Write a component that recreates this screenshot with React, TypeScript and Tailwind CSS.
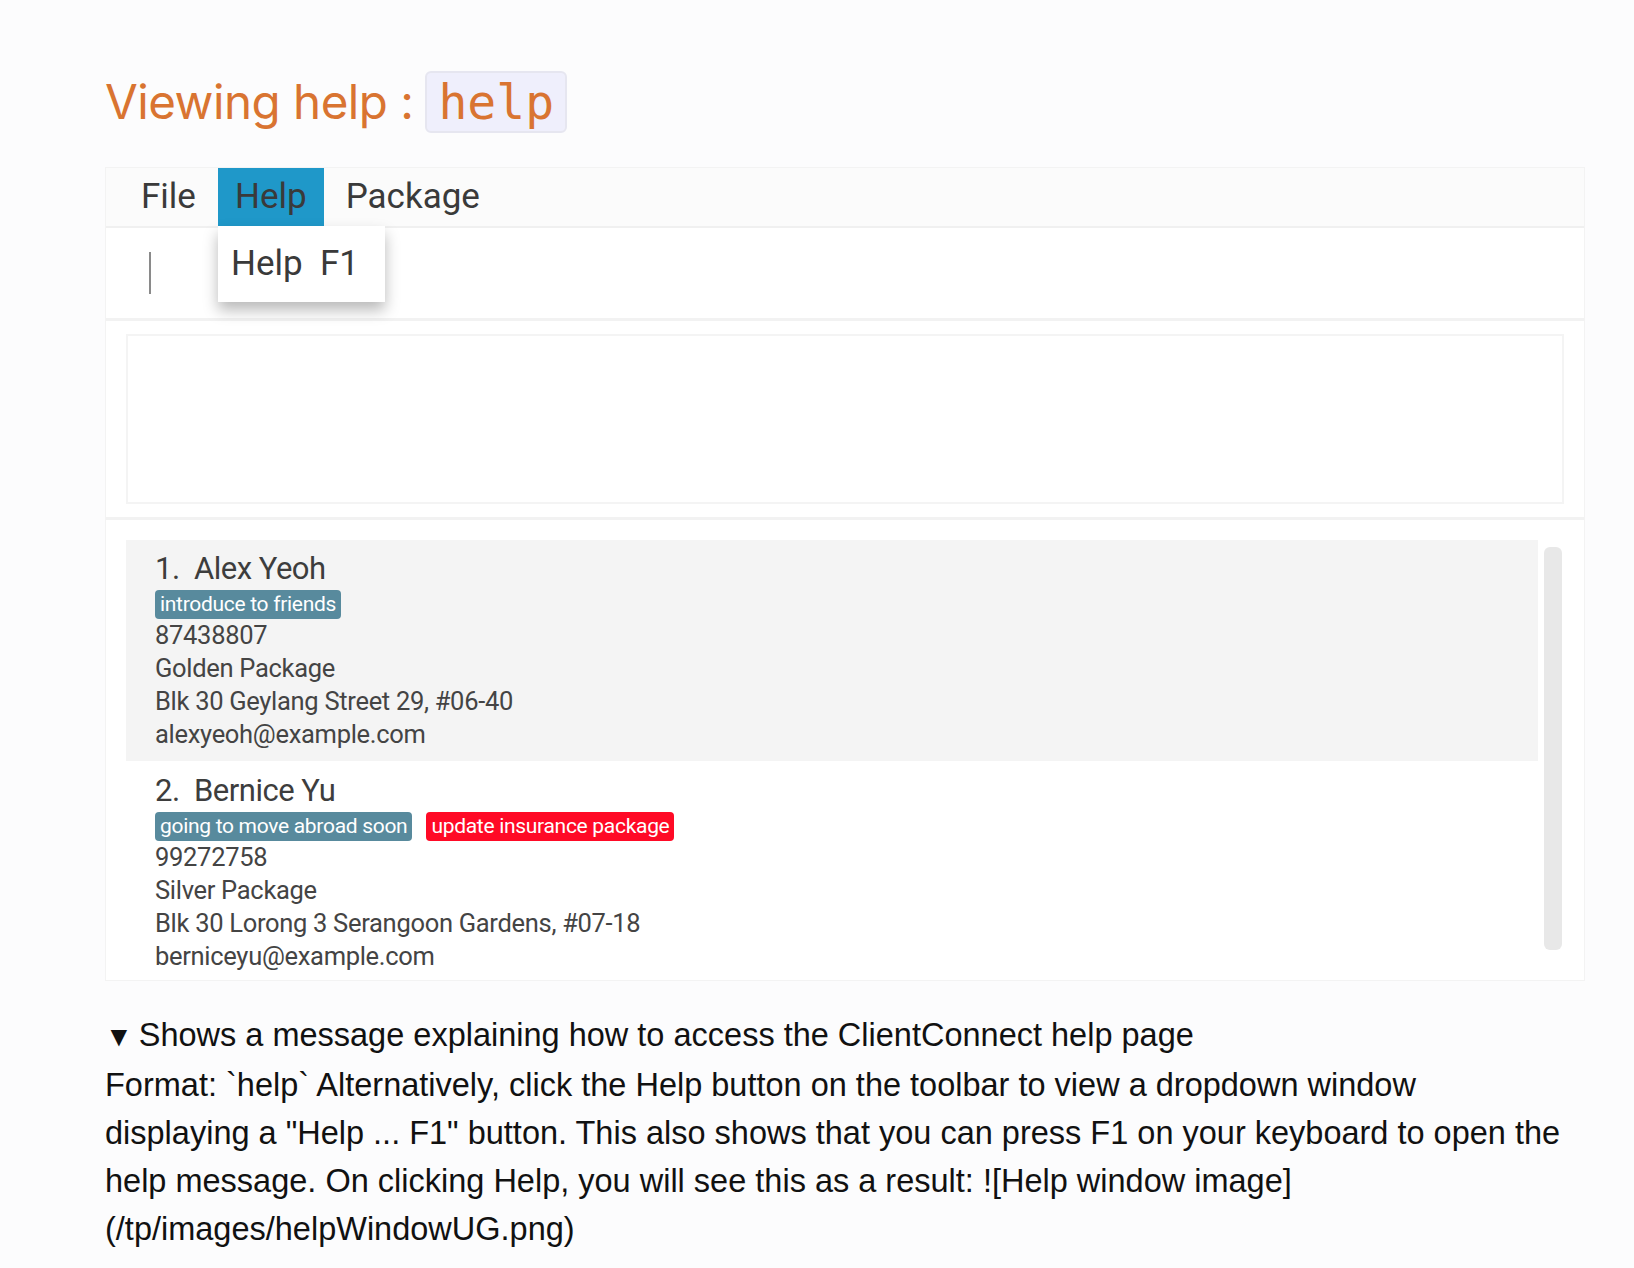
import React from 'react'

type Person = {
  name: string
  tags: { label: string; tone: 'blue' | 'red' }[]
  phone: string
  pkg: string
  address: string
  email: string
}

const people: Person[] = [
  {
    name: 'Alex Yeoh',
    tags: [{ label: 'introduce to friends', tone: 'blue' }],
    phone: '87438807',
    pkg: 'Golden Package',
    address: 'Blk 30 Geylang Street 29, #06-40',
    email: 'alexyeoh@example.com',
  },
  {
    name: 'Bernice Yu',
    tags: [
      { label: 'going to move abroad soon', tone: 'blue' },
      { label: 'update insurance package', tone: 'red' },
    ],
    phone: '99272758',
    pkg: 'Silver Package',
    address: 'Blk 30 Lorong 3 Serangoon Gardens, #07-18',
    email: 'berniceyu@example.com',
  },
]

function PersonCard({ person, index }: { person: Person; index: number }) {
  return (
    <div className={`pl-[29px] pb-[10px] ${index === 0 ? 'bg-[#f4f4f4] pt-[11px]' : 'pt-[12px]'}`}>
      <div className="text-[31px] leading-[36px] text-[#3d3d3d] tracking-[-0.5px]">
        {index + 1}.&nbsp; {person.name}
      </div>
      <div className="flex gap-[14px] mt-[3px]">
        {person.tags.map((t) => (
          <span
            key={t.label}
            className={`h-[29px] leading-[29px] px-[5px] rounded-[4px] text-[21px] text-white tracking-[-0.3px] ${
              t.tone === 'blue' ? 'bg-[#588a9d]' : 'bg-[#ff0a26]'
            }`}
          >
            {t.label}
          </span>
        ))}
      </div>
      <div className="text-[25.5px] leading-[33px] text-[#444] tracking-[-0.3px]">
        <div>{person.phone}</div>
        <div>{person.pkg}</div>
        <div>{person.address}</div>
        <div>{person.email}</div>
      </div>
    </div>
  )
}

export default function App() {
  return (
    <div className="min-h-screen bg-[#fcfcfd] pl-[105px] pr-[49px] pt-[71px] font-['Liberation_Sans',Arial,sans-serif]">
      {/* Heading */}
      <div className="flex items-center h-[62px]">
        <h1 className="text-[47.5px] text-[#d97431] font-['Inter',sans-serif] tracking-[-0.5px]">
          Viewing help :
        </h1>
        <code className="ml-[12px] h-[62px] px-[11px] flex items-center rounded-[6px] border-2 border-[#e6e6f0] bg-[#efeffc] text-[48px] text-[#d97431] font-['DejaVu_Sans_Mono',monospace]">
          help
        </code>
      </div>

      {/* App window */}
      <div className="mt-[34px] bg-white border border-[#f3f3f3] font-['Roboto',sans-serif]">
        {/* Menu bar */}
        <div className="relative h-[60px] flex items-stretch gap-[5px] pl-[18px] bg-[#fbfbfb] border-b-2 border-[#f0f0f0] text-[35px] text-[#3a3a3a]">
          <div className="flex items-center px-[17px]">File</div>
          <div className="relative flex items-center px-[17px] bg-[#1f98c9]">
            Help
            <div className="absolute left-0 top-[58px] w-[167px] h-[76px] bg-white shadow-[0_8px_14px_rgba(0,0,0,0.28)] flex items-center pl-[13px] z-10 whitespace-pre">
              Help  F1
            </div>
          </div>
          <div className="flex items-center px-[17px]">Package</div>
        </div>

        {/* Command box */}
        <div className="h-[93px] flex items-center pl-[43px] border-b-[3px] border-[#f2f2f2]">
          <div className="w-[2px] h-[42px] bg-[#8a8a8a]" />
        </div>

        {/* Result display */}
        <div className="px-[20px] py-[13px] border-b-[3px] border-[#f2f2f2]">
          <div className="h-[170px] border-2 border-[#f4f4f4] bg-white" />
        </div>

        {/* Person list */}
        <div className="h-[460px] overflow-hidden flex pt-[20px] pl-[20px] pr-[22px]">
          <div className="flex-1 flex flex-col">
            {people.map((p, i) => (
              <PersonCard key={p.name} person={p} index={i} />
            ))}
          </div>
          <div className="ml-[6px] mt-[7px] w-[18px] h-[403px] rounded-[6px] bg-[#e8e8e8]" />
        </div>
      </div>

      {/* Description */}
      <div className="mt-[30px] text-[32.5px] leading-[48px] text-[#111] font-['Liberation_Sans',Arial,sans-serif]">
        <div>
          <span className="text-[28px] mr-[6px]">▼</span>Shows a message explaining how to access the ClientConnect help page
        </div>
        <p>
          Format: `help` Alternatively, click the Help button on the toolbar to view a dropdown window
          <br />
          displaying a "Help ... F1" button. This also shows that you can press F1 on your keyboard to open the
          <br />
          help message. On clicking Help, you will see this as a result: ![Help window image]
          <br />
          (/tp/images/helpWindowUG.png)
        </p>
      </div>
    </div>
  )
}
